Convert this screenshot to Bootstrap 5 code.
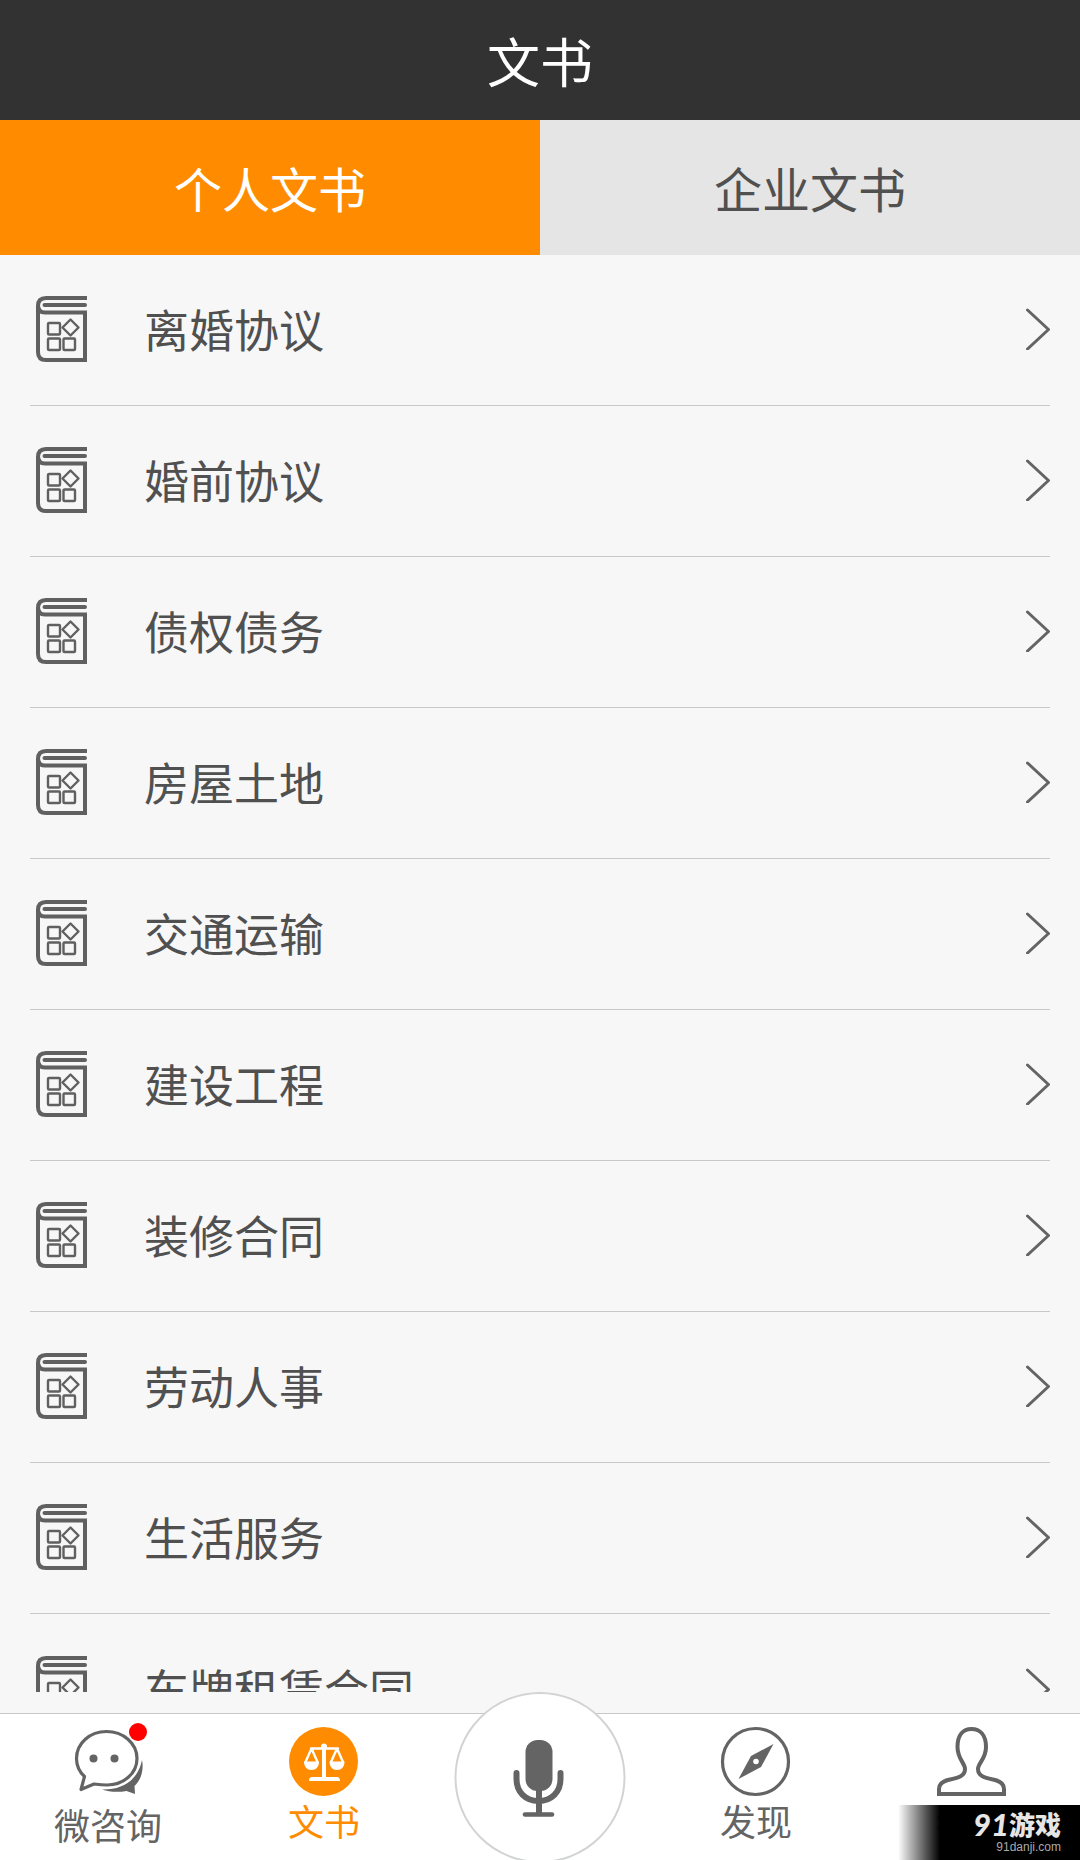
<!DOCTYPE html>
<html lang="zh-CN">
<head>
<meta charset="utf-8">
<meta name="viewport" content="width=device-width, initial-scale=1">
<title>文书</title>
<link href="https://cdn.jsdelivr.net/npm/bootstrap@5.3.0/dist/css/bootstrap.min.css" rel="stylesheet">
<style>
  body { font-family: "Noto Sans CJK SC", sans-serif; background: #f7f7f7; color: #505050; }
  a { color: inherit; text-decoration: none; }
  svg { display: block; flex: none; overflow: visible; }
  .topbar { background: #323232; height: 120px; }
  .topbar h1 { font-size: 53px; font-weight: 400; line-height: 80px; }
  .doc-tabs .nav-link { height: 135px; padding: 0 0 2px; border-radius: 0; font-size: 48px; line-height: 72px; color: #505050; background: #e5e5e5; }
  .doc-tabs .nav-link.active { color: #fff; background: #ff8c00; }
  .doc-list { padding: 0 30px; min-height: 0; }
  .doc-list .list-group-item { height: 151px; flex: none; padding: 0 0 2px 6px; background: transparent; color: #505050; border-color: #c8c8c8; border-bottom-width: 1px; font-size: 45px; line-height: 68px; }
  .doc-list .doc-name { padding-left: 57px; }
  .dock { padding-top: 21px; }
  .dock-bar { height: 147px; background: #fff; border-top: 1px solid #c8c8c8; color: #646464; font-size: 36px; line-height: 48px; }
  .dock-bar .dock-item { padding-top: 13px; }
  .dock-bar .dock-chat span { margin-top: 4px; }
  .dock-bar .dock-on { color: #ff8c00; }
  .mic-btn { width: 171px; height: 171px; top: 0; background: #fff; border: 2px solid #d2d4d4; color: #646464; }
  .site-mark { width: 182px; height: 55px; padding: 4px 19px 0 0; color: #e6e6e6; background: linear-gradient(90deg, rgba(0,0,0,0), #000 42px); }
  .mark-name { font-size: 26px; line-height: 30px; font-weight: 900; }
  .mark-num { font-family: Lato, sans-serif; font-size: 31px; font-style: italic; font-weight: 900; }
  .mark-url { font-family: "Liberation Sans", sans-serif; font-size: 12px; line-height: 16px; color: #aaa; }
</style>
<script src="https://cdn.jsdelivr.net/npm/bootstrap@5.3.0/dist/js/bootstrap.bundle.min.js"></script>
</head>
<body class="vh-100 overflow-hidden d-flex flex-column">
<svg width="0" height="0" class="position-absolute" aria-hidden="true">
  <symbol id="book" viewBox="0 0 51 66">
    <g fill="none" stroke="#606060">
      <path stroke-width="4" d="M51 2H10Q2 2 2 10V56Q2 64 10 64H49V16.500H9Q2 16.500 2 9"/>
      <path stroke-width="4" stroke-linecap="round" d="M8.500 9H49"/>
      <g stroke-width="2.400" stroke-linejoin="round">
        <rect x="12" y="27" width="12" height="11.500" rx="1"/>
        <rect x="12" y="42.500" width="12" height="11.500" rx="1"/>
        <rect x="27.500" y="42.500" width="11.500" height="11.500" rx="1"/>
        <path d="M34.500 23.500L42.500 31.500L34.500 39.500L26.500 31.500Z"/>
      </g>
    </g>
  </symbol>
  <symbol id="chevron" viewBox="0 0 24 42">
    <path d="M1.500 2L22.500 21.500L1.500 41" fill="none" stroke="#646464" stroke-width="3" stroke-linecap="round" stroke-linejoin="round"/>
  </symbol>
</svg>

<header class="topbar d-flex justify-content-center align-items-center text-white flex-shrink-0">
  <h1 class="m-0">文书</h1>
</header>

<div class="doc-tabs nav nav-fill flex-nowrap flex-shrink-0" role="tablist">
  <button type="button" class="nav-link active w-50 border-0" role="tab" aria-selected="true">个人文书</button>
  <button type="button" class="nav-link w-50 border-0" role="tab" aria-selected="false">企业文书</button>
</div>

<main class="doc-list list-group list-group-flush flex-grow-1 overflow-hidden">
  <a href="#" class="list-group-item d-flex align-items-center"><svg width="51" height="66"><use href="#book"/></svg><span class="doc-name flex-grow-1">离婚协议</span><svg width="24" height="42"><use href="#chevron"/></svg></a>
  <a href="#" class="list-group-item d-flex align-items-center"><svg width="51" height="66"><use href="#book"/></svg><span class="doc-name flex-grow-1">婚前协议</span><svg width="24" height="42"><use href="#chevron"/></svg></a>
  <a href="#" class="list-group-item d-flex align-items-center"><svg width="51" height="66"><use href="#book"/></svg><span class="doc-name flex-grow-1">债权债务</span><svg width="24" height="42"><use href="#chevron"/></svg></a>
  <a href="#" class="list-group-item d-flex align-items-center"><svg width="51" height="66"><use href="#book"/></svg><span class="doc-name flex-grow-1">房屋土地</span><svg width="24" height="42"><use href="#chevron"/></svg></a>
  <a href="#" class="list-group-item d-flex align-items-center"><svg width="51" height="66"><use href="#book"/></svg><span class="doc-name flex-grow-1">交通运输</span><svg width="24" height="42"><use href="#chevron"/></svg></a>
  <a href="#" class="list-group-item d-flex align-items-center"><svg width="51" height="66"><use href="#book"/></svg><span class="doc-name flex-grow-1">建设工程</span><svg width="24" height="42"><use href="#chevron"/></svg></a>
  <a href="#" class="list-group-item d-flex align-items-center"><svg width="51" height="66"><use href="#book"/></svg><span class="doc-name flex-grow-1">装修合同</span><svg width="24" height="42"><use href="#chevron"/></svg></a>
  <a href="#" class="list-group-item d-flex align-items-center"><svg width="51" height="66"><use href="#book"/></svg><span class="doc-name flex-grow-1">劳动人事</span><svg width="24" height="42"><use href="#chevron"/></svg></a>
  <a href="#" class="list-group-item d-flex align-items-center"><svg width="51" height="66"><use href="#book"/></svg><span class="doc-name flex-grow-1">生活服务</span><svg width="24" height="42"><use href="#chevron"/></svg></a>
  <a href="#" class="list-group-item d-flex align-items-center"><svg width="51" height="66"><use href="#book"/></svg><span class="doc-name flex-grow-1">车牌租赁合同</span><svg width="24" height="42"><use href="#chevron"/></svg></a>
</main>

<footer class="dock position-relative flex-shrink-0">
  <nav class="dock-bar row row-cols-5 g-0">
    <a href="#" class="dock-item dock-chat col d-flex flex-column align-items-center">
      <svg width="70" height="69" viewBox="0 0 70 69">
        <path d="M8 62.500L11.500 49.500C5.500 44 3.500 37 3.500 31.500C3.500 16 17 4.500 33.500 4.500S64 16 64 31.500S50 58 34 58C29 58 25 57.500 21 57Z" fill="none" stroke="#646464" stroke-width="3.200" stroke-linejoin="round"/>
        <circle cx="20.500" cy="31.500" r="4" fill="#646464"/><circle cx="41.500" cy="31.500" r="4" fill="#646464"/>
        <path d="M69 33C71 43 68 53 61.500 59L62 67L53.500 64C45 65.500 36 65 29 62.500C50 63 65 53 69 33Z" fill="#646464"/>
        <circle cx="65" cy="5" r="9" fill="#f00"/>
      </svg>
      <span>微咨询</span>
    </a>
    <a href="#" class="dock-item dock-on col d-flex flex-column align-items-center">
      <svg width="70" height="69" viewBox="0 0 70 69">
        <circle cx="34.500" cy="34.500" r="34.500" fill="#ff8c00"/>
        <g fill="#fff">
          <circle cx="35" cy="19.500" r="3"/>
          <path d="M33 19H37V50H48Q51 50 51 54H20Q20 50 23 50H33Z"/>
          <path d="M15 34.500H30C30 40 27 43 22.500 43S15 40 15 34.500Z"/>
          <path d="M40.500 34.500H55.500C55.500 40 52.500 43 48 43S40.500 40 40.500 34.500Z"/>
        </g>
        <path d="M22 21.500H49M22.500 21.500L16.500 35M22.500 21.500L28.500 35M48 21.500L42 35M48 21.500L54 35" fill="none" stroke="#fff" stroke-width="2.400" stroke-linecap="round"/>
      </svg>
      <span>文书</span>
    </a>
    <div class="col"></div>
    <a href="#" class="dock-item col d-flex flex-column align-items-center">
      <svg width="70" height="69" viewBox="0 0 70 69">
        <circle cx="34.500" cy="34.500" r="33" fill="none" stroke="#646464" stroke-width="3.200"/>
        <path d="M52.500 17L40 40L17.500 52L30 29Z" fill="#646464"/>
        <circle cx="35" cy="34.500" r="2.800" fill="#fff"/>
      </svg>
      <span>发现</span>
    </a>
    <a href="#" class="dock-item col d-flex flex-column align-items-center">
      <svg width="70" height="69" viewBox="0 0 70 69">
        <path d="M2 67V62C2 57 5 54.500 11 53C20 51 28 50 28 42C28 36 20.500 32 20.500 20C20.500 8 26 2 34.500 2S49 8 49 20C49 32 41 36 41 42C41 50 49 51 58 53C64 54.500 67 57 67 62V67Z" fill="none" stroke="#646464" stroke-width="4"/>
      </svg>
      <span>我的</span>
    </a>
  </nav>
  <button type="button" aria-label="语音" class="mic-btn position-absolute start-50 translate-middle-x rounded-circle p-0 d-flex justify-content-center align-items-center">
    <svg width="52" height="77" viewBox="0 0 52 77">
      <rect x="11" y="1" width="27" height="51" rx="12" fill="#646464"/>
      <path d="M2 34V40C2 53 11 62 24 62S46 53 46 40V34" fill="none" stroke="#646464" stroke-width="6" stroke-linecap="round"/>
      <path d="M24.500 50V75" stroke="#646464" stroke-width="6"/>
      <path d="M10.500 75.500H37.500" stroke="#646464" stroke-width="4.600" stroke-linecap="round"/>
    </svg>
  </button>
  <div class="site-mark position-absolute end-0 bottom-0 d-flex flex-column align-items-end">
    <div class="mark-name d-flex"><span class="mark-num">91</span><span>游戏</span></div>
    <div class="mark-url">91danji.com</div>
  </div>
</footer>
</body>
</html>
